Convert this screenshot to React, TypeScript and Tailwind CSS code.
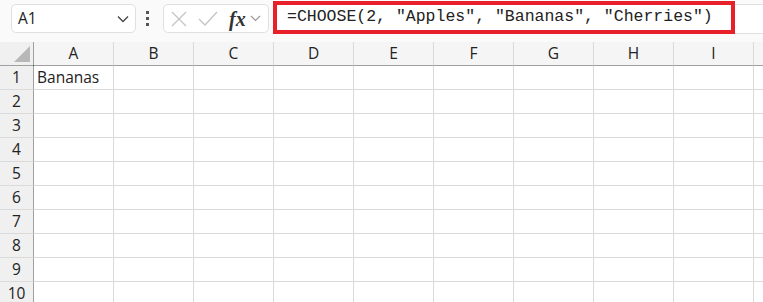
import React from 'react';

const cols = ['A', 'B', 'C', 'D', 'E', 'F', 'G', 'H', 'I'];
const rows = [1, 2, 3, 4, 5, 6, 7, 8, 9, 10];

const App = () => {
  return (
    <div className="w-[763px] h-[302px] overflow-hidden bg-white font-['Open_Sans','Noto_Sans',sans-serif] text-[#222]">
      {/* Formula bar */}
      <div className="flex h-[42px] items-start bg-[#fafafa]">
        <div className="ml-[11px] mt-[4px] flex h-[29px] w-[125px] items-center justify-between rounded-[5px] border border-[#e0e0e0] bg-white pl-[6px] pr-[6px]">
          <span className="text-[15.5px] leading-none">A1</span>
          <svg width="12" height="8" viewBox="0 0 12 8" fill="none" stroke="#444" strokeWidth="1.3">
            <path d="M1 1.5l5 5 5-5" />
          </svg>
        </div>
        <div className="ml-[9px] mt-[11px] flex w-[5px] flex-col items-center gap-[3px]">
          <span className="h-[3px] w-[3px] bg-[#555]" />
          <span className="h-[3px] w-[3px] bg-[#555]" />
          <span className="h-[3px] w-[3px] bg-[#555]" />
        </div>
        <div className="ml-[13px] mt-[4px] flex h-[29px] w-[106px] items-center rounded-[5px] border border-[#e0e0e0] bg-white">
          <svg className="ml-[7px]" width="16" height="16" viewBox="0 0 16 16" fill="none" stroke="#c4c4c4" strokeWidth="1.3">
            <path d="M1 1l14 14M15 1L1 15" />
          </svg>
          <svg className="ml-[11px]" width="20" height="15" viewBox="0 0 20 15" fill="none" stroke="#c4c4c4" strokeWidth="1.3">
            <path d="M1 8l6 6L19 1" />
          </svg>
          <span className="ml-[11px] font-['Liberation_Serif',serif] text-[20px] font-semibold italic leading-none text-[#333]">fx</span>
          <svg className="ml-[4px]" width="11" height="7" viewBox="0 0 11 7" fill="none" stroke="#999" strokeWidth="1.1">
            <path d="M1 1l4.5 4.5L10 1" />
          </svg>
        </div>
        <div className="ml-[4px] mt-[1px] flex h-[33px] w-[462px] shrink-0 items-center border-4 border-[#e8202a] bg-white pl-[10px]">
          <span className="whitespace-pre font-['Liberation_Mono',monospace] text-[16.5px] leading-none text-[#222]">
            =CHOOSE(2, "Apples", "Bananas", "Cherries")
          </span>
        </div>
        <div className="mt-[4px] h-[30px] flex-1 border-y border-[#e0e0e0] bg-white" />
      </div>

      {/* Grid */}
      <div className="flex h-[24px] bg-[#f5f5f5]">
        <div className="relative flex h-[24px] w-[34px] shrink-0 border-r border-b border-[#a0a0a0] bg-[#f0f0f0]">
          <svg className="absolute left-[14px] top-[4px]" width="16" height="16" viewBox="0 0 16 16">
            <path d="M16 0V16H0Z" fill="#b8b8b8" />
          </svg>
          <span className="absolute right-[-1px] bottom-[-1px] h-[1px] w-[1px] bg-[#217346]" />
        </div>
        {cols.map((c) => (
          <div
            key={c}
            className="flex h-[24px] w-[80px] shrink-0 items-center justify-center border-r border-b border-r-[#dadada] border-b-[#a0a0a0] text-[15.5px]"
          >
            {c}
          </div>
        ))}
        <div className="h-[24px] flex-1 border-b border-[#a0a0a0]" />
      </div>
      {rows.map((r) => (
        <div key={r} className="flex h-[24px]">
          <div className="flex h-[24px] w-[34px] shrink-0 items-center justify-center border-r border-b border-r-[#a0a0a0] border-b-[#dadada] bg-[#f0f0f0] text-[15.5px]">
            {r}
          </div>
          {cols.map((c) => (
            <div
              key={c}
              className="flex h-[24px] w-[80px] shrink-0 items-center border-r border-b border-[#dadada] px-[3px] text-[15.5px]"
            >
              {r === 1 && c === 'A' ? 'Bananas' : ''}
            </div>
          ))}
          <div className="h-[24px] flex-1 border-b border-[#dadada]" />
        </div>
      ))}
    </div>
  );
};

export default App;
